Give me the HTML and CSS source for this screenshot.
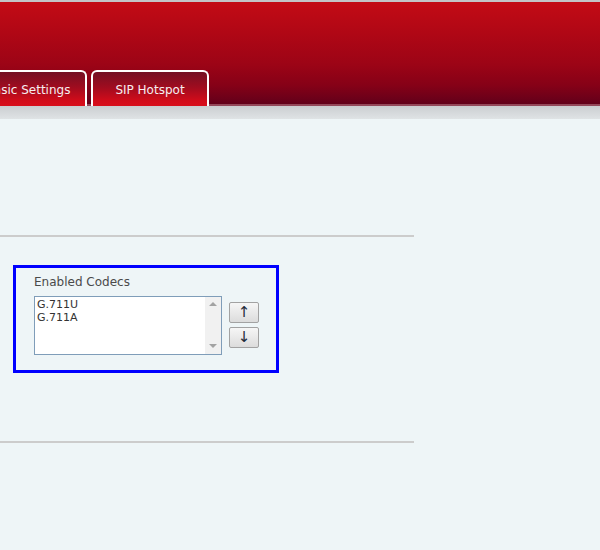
FILE: index.html
```html
<!DOCTYPE html>
<html>
<head>
<meta charset="utf-8">
<link rel="stylesheet" href="styles.css">
</head>
<body>
<div class="topline"></div>
<div class="header">
  <div class="tabs">
    <div class="tab">Basic Settings</div>
    <div class="tab">SIP Hotspot</div>
  </div>
</div>
<div class="band"></div>
<div class="content">
  <div class="rule"></div>
  <div class="codecbox">
    <div class="label">Enabled Codecs</div>
    <div class="row">
      <div class="listbox">
        <div class="options">
          <div class="opt">G.711U</div>
          <div class="opt">G.711A</div>
        </div>
        <div class="scroll">
          <span class="arrow up"></span>
          <span class="arrow down"></span>
        </div>
      </div>
      <div class="btns">
        <button class="btn">↑</button>
        <button class="btn">↓</button>
      </div>
    </div>
  </div>
  <div class="rule second"></div>
</div>
</body>
</html>
```

FILE: styles.css
```css
html, body {
  margin: 0;
  padding: 0;
}
body {
  background: #eef5f7;
  font-family: "DejaVu Sans", Verdana, sans-serif;
  width: 600px;
  height: 550px;
  overflow: hidden;
}
.topline {
  height: 2px;
  background: #c4c4c6;
}
.header {
  height: 104px;
  background: linear-gradient(#c30b15 0%, #b00715 30%, #9c0416 60%, #860117 80%, #62001a 98%);
  box-shadow: inset 0 -2px 0 #94485a;
  display: flex;
  align-items: flex-end;
}
.tabs {
  display: flex;
  gap: 4px;
  margin-left: -31px;
}
.tab {
  width: 114px;
  height: 33px;
  border: 2px solid #ffffff;
  border-bottom: 0;
  border-radius: 6px 6px 0 0;
  background: linear-gradient(#741024 0%, #a00c1f 45%, #d20c1a 85%, #d80e1b 100%);
  color: #f6eef0;
  font-size: 12px;
  display: flex;
  align-items: center;
  justify-content: center;
  padding-top: 1px;
  box-sizing: content-box;
}
.band {
  height: 13px;
  background: linear-gradient(#cbced1, #dfe3e5);
}
.content {
  padding-top: 116px;
}
.rule {
  width: 414px;
  height: 2px;
  background: #cccccc;
}
.rule.second {
  margin-top: 68px;
}
.codecbox {
  margin: 28px 0 0 13px;
  border: 3px solid #0000ff;
  padding: 7px 0 0 18px;
  box-sizing: content-box;
  width: 242px;
  height: 95px;
}
.label {
  font-size: 12px;
  line-height: 15px;
  color: #4a4a4a;
}
.row {
  display: flex;
  margin-top: 6px;
  gap: 7px;
}
.listbox {
  width: 186px;
  height: 57px;
  border: 1px solid #7f9db9;
  background: #ffffff;
  display: flex;
}
.options {
  flex: 1;
  padding: 1px 0 0 2px;
}
.opt {
  font-size: 11px;
  line-height: 13px;
  color: #333333;
}
.scroll {
  width: 16px;
  background: #f1f1f1;
  display: flex;
  flex-direction: column;
  justify-content: space-between;
  align-items: center;
  padding: 5px 0 6px;
}
.arrow {
  width: 0;
  height: 0;
  border-left: 4px solid transparent;
  border-right: 4px solid transparent;
}
.arrow.up {
  border-bottom: 4px solid #a3a3a3;
}
.arrow.down {
  border-top: 4px solid #a3a3a3;
}
.btns {
  display: flex;
  flex-direction: column;
  gap: 4px;
  margin-top: 6px;
}
.btn {
  width: 30px;
  height: 21px;
  border: 1px solid #a2a2a2;
  border-radius: 2px;
  background: linear-gradient(#f6f6f6, #dcdcdc);
  font-family: "DejaVu Sans", sans-serif;
  font-size: 15px;
  line-height: 17px;
  color: #1e2a3a;
  padding: 0;
  margin: 0;
}
```
